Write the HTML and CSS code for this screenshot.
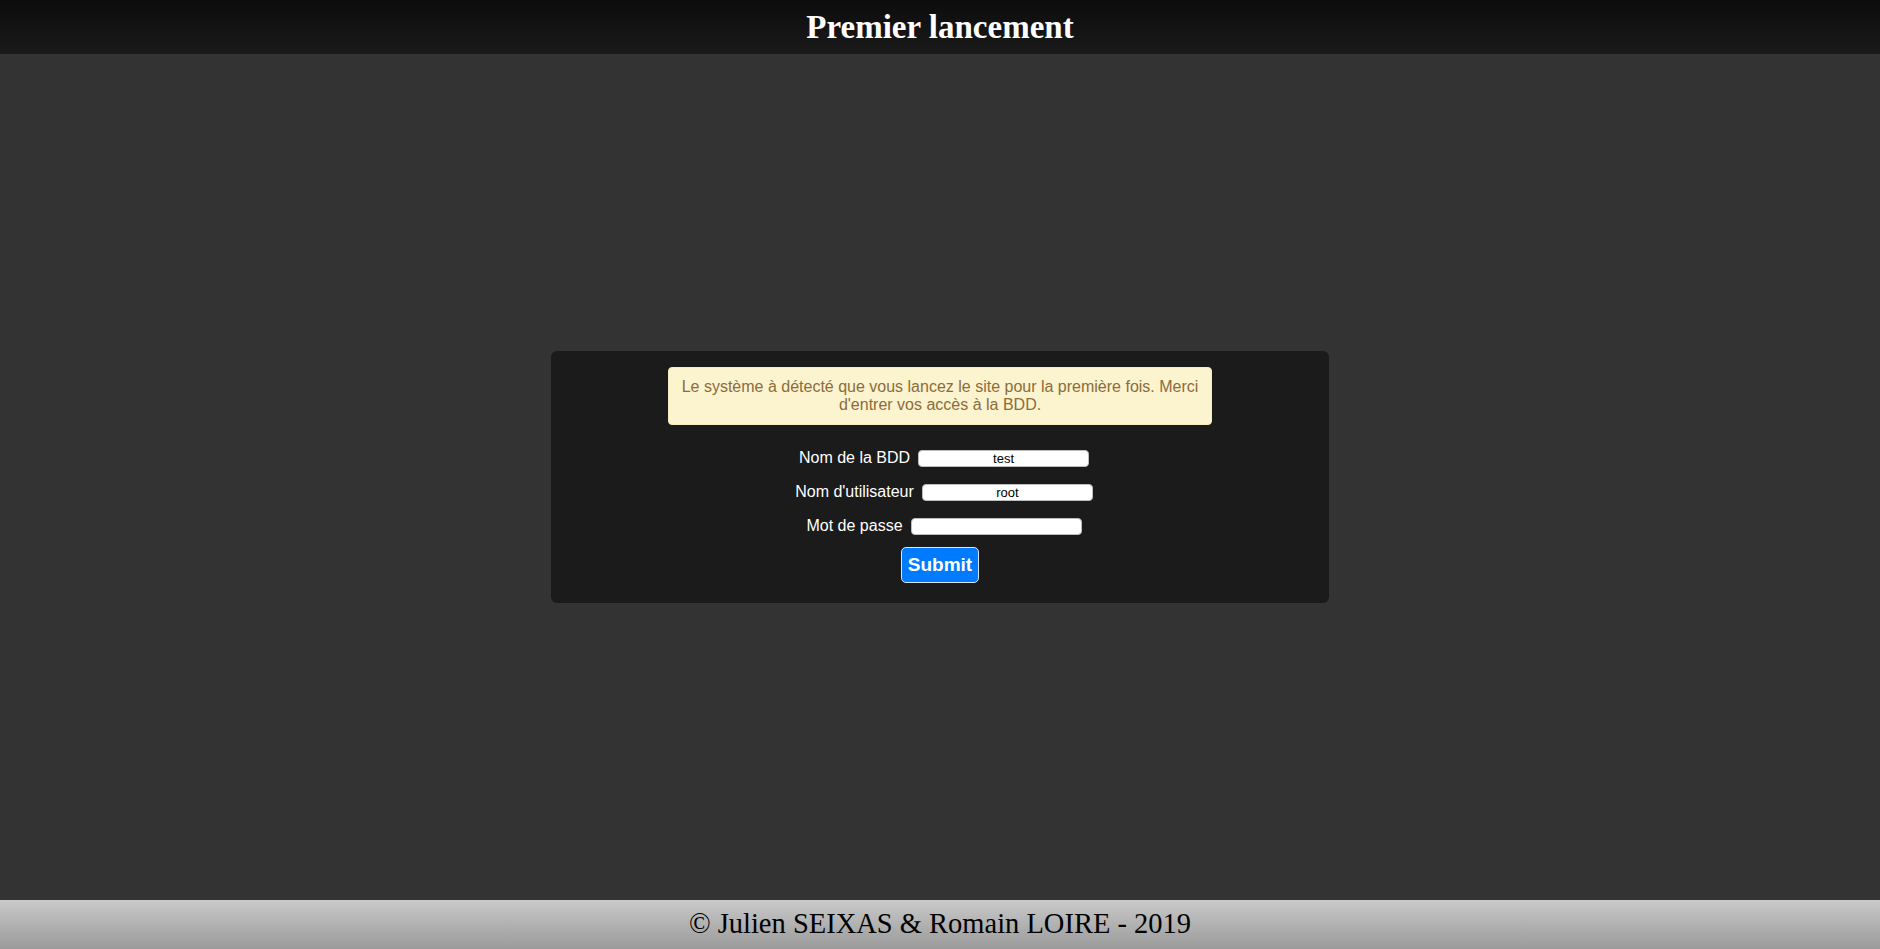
FILE: index.html
```html
<!DOCTYPE html>
<html lang="fr">
<head>
<meta charset="utf-8">
<title>Premier lancement</title>
<link rel="stylesheet" href="styles.css">
</head>
<body>
<header class="topbar">
  <h1 class="title">Premier lancement</h1>
</header>
<main class="main">
  <div class="card">
    <div class="alert">Le système à détecté que vous lancez le site pour la première fois. Merci d'entrer vos accès à la BDD.</div>
    <form class="form">
      <div class="row">
        <label class="label" for="bdd">Nom de la BDD</label>
        <input class="field" id="bdd" type="text" value="test">
      </div>
      <div class="row">
        <label class="label" for="user">Nom d'utilisateur</label>
        <input class="field" id="user" type="text" value="root">
      </div>
      <div class="row">
        <label class="label" for="pass">Mot de passe</label>
        <input class="field" id="pass" type="password" value="">
      </div>
      <button class="submit" type="button">Submit</button>
    </form>
  </div>
</main>
<footer class="footer">© Julien SEIXAS &amp; Romain LOIRE - 2019</footer>
</body>
</html>
```

FILE: styles.css
```css
html, body {
  margin: 0;
  padding: 0;
  height: 100%;
}

body {
  background: #333333;
  display: flex;
  flex-direction: column;
  font-family: "Liberation Sans", Arial, sans-serif;
}

.topbar {
  height: 54px;
  box-sizing: border-box;
  padding: 8px 0;
  background: linear-gradient(to bottom, #0c0c0c, #1a1a1a);
  text-align: center;
}

.title {
  margin: 0;
  font-family: "Liberation Serif", "Times New Roman", serif;
  font-weight: bold;
  font-size: 33px;
  line-height: 38px;
  color: #ffffff;
}

.main {
  flex: 1;
  display: flex;
  align-items: center;
  justify-content: center;
}

.card {
  width: 778px;
  box-sizing: border-box;
  padding: 16px 0 20px;
  background: #1b1b1b;
  border-radius: 6px;
  display: flex;
  flex-direction: column;
  align-items: center;
}

.alert {
  width: 70%;
  box-sizing: border-box;
  padding: 10px 10px;
  background: #fcf3cf;
  border: 1px solid #f6ecc0;
  border-radius: 4px;
  color: #8a6d3b;
  font-size: 16px;
  line-height: 18.4px;
  text-align: center;
}

.form {
  margin: 16px 0 0;
  display: flex;
  flex-direction: column;
  align-items: center;
}

.row {
  height: 34px;
  display: flex;
  align-items: center;
  justify-content: center;
  gap: 8px;
  padding-left: 8px;
}

.label {
  color: #ffffff;
  font-size: 16px;
}

.field {
  width: 171px;
  height: 17px;
  box-sizing: border-box;
  margin: 0;
  padding: 0 2px;
  border: 1px solid #bdbdbd;
  border-radius: 4px;
  background: #ffffff;
  color: #000000;
  font-family: "Liberation Sans", Arial, sans-serif;
  font-size: 13px;
  text-align: center;
  outline: none;
}

.submit {
  margin-top: 4px;
  padding: 6px 6px;
  background: #007bff;
  border: 1px solid #d8e6f5;
  border-radius: 5px;
  color: #ffffff;
  font-family: "Liberation Sans", Arial, sans-serif;
  font-weight: bold;
  font-size: 19px;
  line-height: 22px;
  cursor: pointer;
}

.footer {
  height: 49px;
  box-sizing: border-box;
  padding: 8px 0 0;
  background: linear-gradient(to bottom, #c9c9c9, #9a9a9a);
  color: #000000;
  font-family: "Liberation Serif", "Times New Roman", serif;
  font-size: 28.5px;
  line-height: 32px;
  text-align: center;
}
```
